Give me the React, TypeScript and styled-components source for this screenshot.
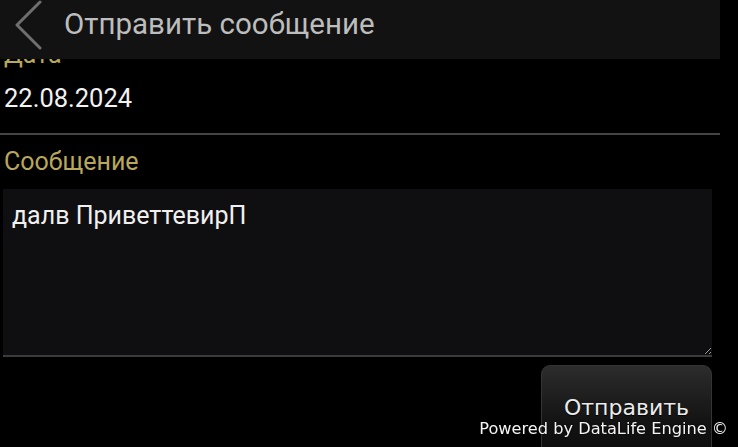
import React from "react";
import styled, { createGlobalStyle } from "styled-components";

const GlobalStyle = createGlobalStyle`
  html, body {
    margin: 0;
    padding: 0;
    background: #000;
    overflow: hidden;
  }
  body {
    font-family: Roboto, "Noto Sans", sans-serif;
    color: #fff;
  }
`;

const Header = styled.header`
  position: fixed;
  top: 0;
  left: 0;
  width: 720px;
  height: 59px;
  background: #121212;
  display: flex;
  align-items: flex-start;
  z-index: 2;
`;

const BackButton = styled.button`
  width: 64px;
  height: 50px;
  padding: 0 0 0 14px;
  margin: 0;
  border: none;
  background: transparent;
  display: flex;
  align-items: flex-start;
`;

const Title = styled.h1`
  margin: 0;
  padding-top: 6px;
  font-family: Roboto, sans-serif;
  font-weight: 400;
  font-size: 29.5px;
  line-height: 36px;
  color: #bdbdbd;
`;

const Content = styled.main`
  width: 720px;
  padding-top: 40px;
  display: flex;
  flex-direction: column;
`;

const Label = styled.label<{ $gap?: number }>`
  display: block;
  padding-left: 4px;
  font-family: Roboto, sans-serif;
  font-size: 25px;
  line-height: 30px;
  color: #b8a75c;
  margin-top: ${(p) => p.$gap ?? 0}px;
`;

const Value = styled.div`
  padding-left: 4px;
  margin-top: 13px;
  font-family: Roboto, sans-serif;
  font-size: 25.5px;
  line-height: 30px;
  color: #f2f2f2;
`;

const Divider = styled.hr`
  margin: 20px 0 0;
  border: none;
  height: 2px;
  width: 720px;
  background: #454545;
`;

const MessageBox = styled.textarea`
  display: block;
  box-sizing: border-box;
  margin: 12px 0 0 3px;
  width: 709px;
  height: 168px;
  padding: 12px 9px;
  background: #0f0e11;
  color: #f0f0f0;
  border: none;
  border-bottom: 2px solid #3c3c3c;
  outline: none;
  font-family: Roboto, sans-serif;
  font-size: 25px;
  line-height: 30px;
  resize: vertical;
`;

const Actions = styled.div`
  display: flex;
  justify-content: flex-end;
  width: 712px;
  margin-top: 8px;
`;

const SendButton = styled.button`
  box-sizing: border-box;
  width: 171px;
  height: 92px;
  padding: 0 0 6px;
  border: 1px solid #343434;
  border-radius: 9px;
  background: linear-gradient(#2c2c2c, #141414 60%, #0c0c0c);
  color: #ececec;
  font-family: "DejaVu Sans", Verdana, sans-serif;
  font-size: 22px;
  line-height: 30px;
  text-shadow: 0 1px 1px #000;
`;

const Powered = styled.div`
  position: fixed;
  right: 10px;
  bottom: 8px;
  font-family: "DejaVu Sans", Verdana, sans-serif;
  font-size: 16.2px;
  line-height: 20px;
  color: #f4f4f4;
  text-shadow: 0 0 2px #000;
  z-index: 3;
`;

function Chevron() {
  return (
    <svg width="30" height="50" viewBox="0 0 30 50" fill="none">
      <path d="M26 2 L3 25 L26 48" stroke="#6f6f6f" strokeWidth="3" strokeLinecap="round" strokeLinejoin="round" />
    </svg>
  );
}

export default function App() {
  return (
    <>
      <GlobalStyle />
      <Header>
        <BackButton aria-label="Назад">
          <Chevron />
        </BackButton>
        <Title>Отправить сообщение</Title>
      </Header>
      <Content>
        <Label>Дата</Label>
        <Value>22.08.2024</Value>
        <Divider />
        <Label $gap={12}>Сообщение</Label>
        <MessageBox defaultValue="далв ПриветтевирП" />
        <Actions>
          <SendButton>Отправить</SendButton>
        </Actions>
      </Content>
      <Powered>Powered by DataLife Engine ©</Powered>
    </>
  );
}
